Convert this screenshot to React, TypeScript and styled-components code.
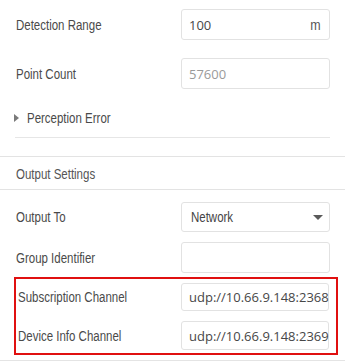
import styled, { createGlobalStyle } from "styled-components"

const GlobalStyle = createGlobalStyle`
    html, body {
        margin: 0;
        padding: 0;
        background: #ffffff;
    }
    body {
        font-family: "Liberation Sans", Arial, sans-serif;
    }
`

const App = () => {
    return (
        <>
            <GlobalStyle />
            <Panel>
                <Section>
                    <Row top={9}>
                        <Label><Narrow>Detection Range</Narrow></Label>
                        <Field h={31}>
                            <Value>100</Value>
                            <Unit>m</Unit>
                        </Field>
                    </Row>
                    <Row top={18}>
                        <Label><Narrow>Point Count</Narrow></Label>
                        <Field h={31}>
                            <Value muted>57600</Value>
                        </Field>
                    </Row>
                    <Collapse>
                        <Caret />
                        <CollapseTitle><Narrow>Perception Error</Narrow></CollapseTitle>
                    </Collapse>
                </Section>

                <Header><Narrow>Output Settings</Narrow></Header>

                <Section>
                    <Row top={12}>
                        <Label><Narrow>Output To</Narrow></Label>
                        <Field h={30}>
                            <SelectText><Narrow>Network</Narrow></SelectText>
                            <Arrow />
                        </Field>
                    </Row>
                    <Row top={10}>
                        <Label><Narrow>Group Identifier</Narrow></Label>
                        <Field h={31} />
                    </Row>
                    <Highlight>
                        <Row top={0} inner>
                            <Label inner><Narrow>Subscription Channel</Narrow></Label>
                            <Field h={28}>
                                <Value>udp://10.66.9.148:2368</Value>
                            </Field>
                        </Row>
                        <Row top={10} inner>
                            <Label inner><Narrow>Device Info Channel</Narrow></Label>
                            <Field h={29}>
                                <Value>udp://10.66.9.148:2369</Value>
                            </Field>
                        </Row>
                    </Highlight>
                </Section>
                <Footer />
            </Panel>
        </>
    )
}

const Panel = styled.div`
    width: 345px;
    height: 361px;
    overflow: hidden;
    background: #ffffff;
`

const Section = styled.div`
    padding: 0 15px;
`

// the labels in the shot are a condensed face, squeeze the regular one
const Narrow = styled.span`
    display: inline-block;
    transform: scaleX(0.82);
    transform-origin: left center;
    white-space: nowrap;
`

const Row = styled.div<{ top: number; inner?: boolean }>`
    display: grid;
    grid-template-columns: ${(p) => (p.inner ? "165px 148px" : "166px 149px")};
    align-items: center;
    margin-top: ${(p) => p.top}px;
`

const Label = styled.div<{ inner?: boolean }>`
    font-size: 14px;
    color: #4a4a4a;
    padding-left: ${(p) => (p.inner ? "2px" : "1px")};
    white-space: nowrap;
`

const Field = styled.div<{ h: number }>`
    box-sizing: border-box;
    height: ${(p) => p.h}px;
    border: 1px solid #e2e2e2;
    border-radius: 3px;
    display: flex;
    align-items: center;
    justify-content: space-between;
    padding: 0 9px 0 7px;
`

const Value = styled.span<{ muted?: boolean }>`
    font-family: "Open Sans", "Liberation Sans", sans-serif;
    font-size: 13px;
    color: ${(p) => (p.muted ? "#9a9a9a" : "#474747")};
    white-space: nowrap;
`

const Unit = styled.span`
    font-size: 15px;
    color: #555555;
    display: inline-block;
    transform: scaleX(0.83);
    transform-origin: right center;
`

const SelectText = styled.span`
    font-size: 14px;
    color: #444444;
    padding-left: 2px;
`

const Arrow = styled.span`
    width: 0;
    height: 0;
    border-left: 5px solid transparent;
    border-right: 5px solid transparent;
    border-top: 5px solid #5a5a5a;
    margin-right: -3px;
`

const Collapse = styled.div`
    display: flex;
    align-items: center;
    gap: 8px;
    height: 22px;
    margin-top: 18px;
    padding-bottom: 8px;
    border-bottom: 1px solid #e6e6e6;
`

const Caret = styled.span`
    width: 0;
    height: 0;
    border-top: 4px solid transparent;
    border-bottom: 4px solid transparent;
    border-left: 5px solid #7a7a7a;
    margin-left: -1px;
`

const CollapseTitle = styled.span`
    font-size: 14px;
    color: #4a4a4a;
`

const Header = styled.div`
    margin-top: 18px;
    border-top: 1px solid #e3e3e3;
    border-bottom: 1px solid #e3e3e3;
    height: 31px;
    display: flex;
    align-items: center;
    padding: 1px 16px 0;
    font-size: 14px;
    color: #555555;
`

const Highlight = styled.div`
    margin: 4px -8px 0 -1px;
    border: 2px solid #e01010;
    padding: 4px 7px 3px 0;
`

const Footer = styled.div`
    margin-top: 5px;
    border-top: 2px solid #e4e4e4;
`

export default App
